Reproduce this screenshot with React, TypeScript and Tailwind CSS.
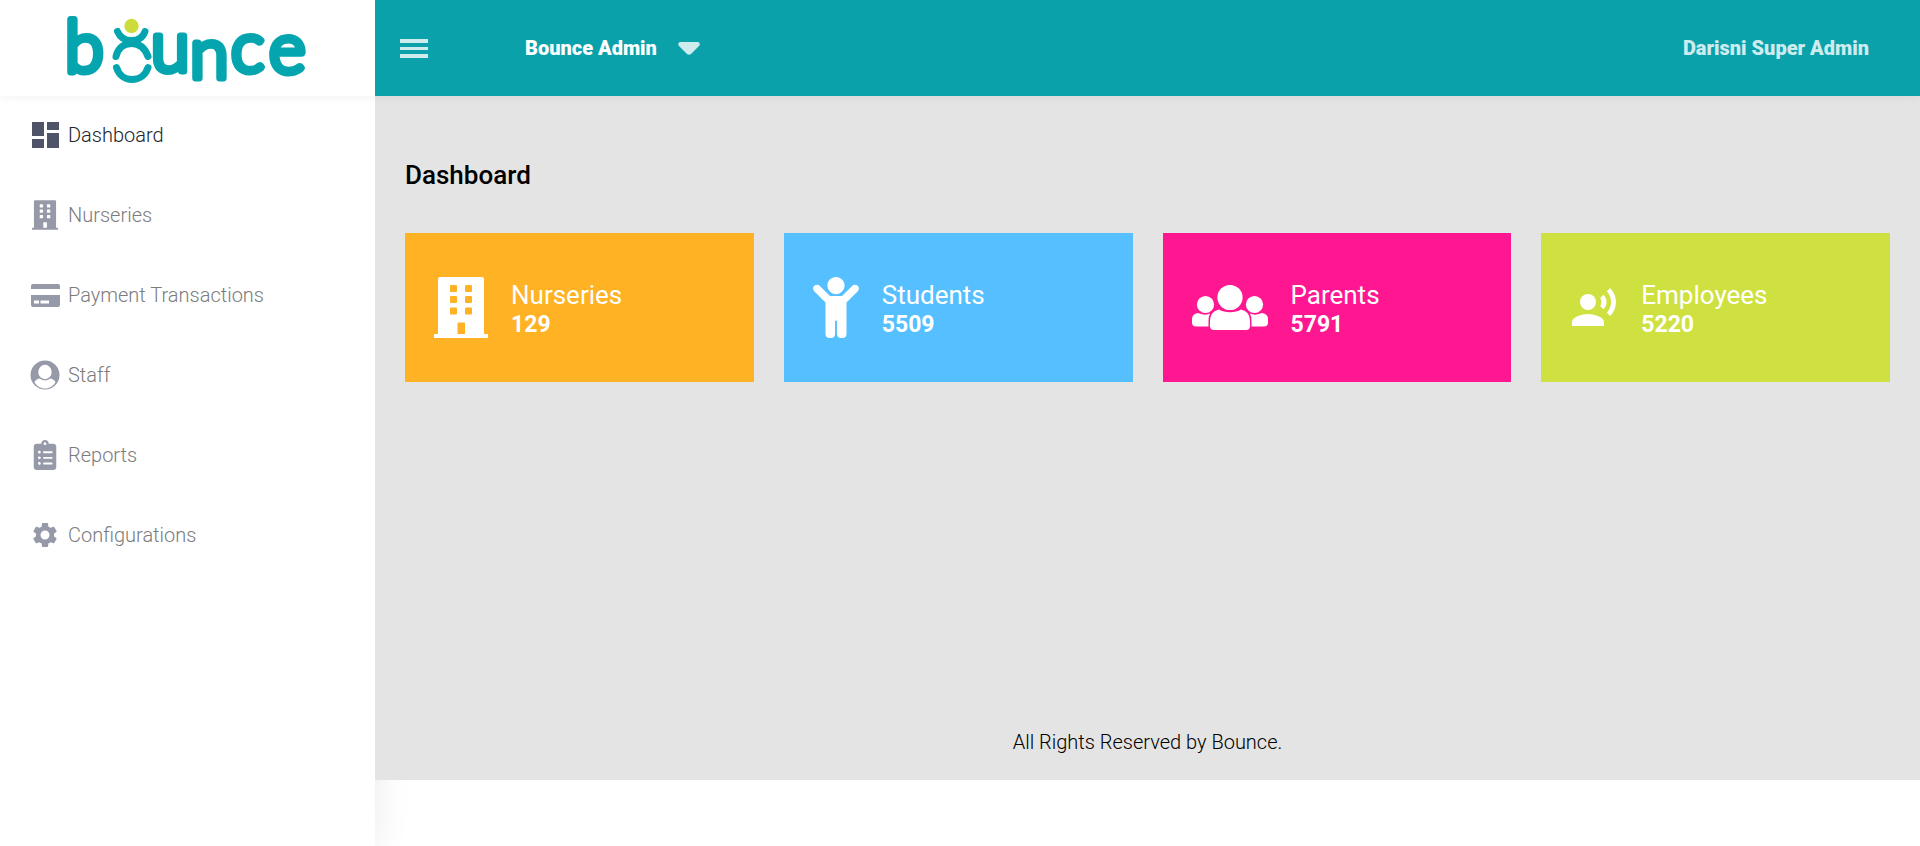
import type { ReactNode } from "react";
import { FaChild, FaClipboardList } from "react-icons/fa";
import { MdRecordVoiceOver, MdSettings } from "react-icons/md";

function BounceLogo() {
  return (
    <svg viewBox="-8 -13 260 96" role="img" aria-label="bounce" className="h-24 w-[260px]">
      <g
        fill="#05a5b0"
        stroke="#05a5b0"
        strokeWidth="7"
        strokeLinejoin="round"
        fontFamily="Lato, sans-serif"
        fontWeight="300"
        fontSize="70"
      >
        <text x="-1" y="59">b</text>
        <text x="85" y="58">u</text>
        <text x="124" y="65">n</text>
        <text x="165" y="59">c</text>
        <text x="203" y="60">e</text>
      </g>
      <g fill="none" stroke="#05a5b0" strokeWidth="7" strokeLinecap="round">
        <path d="M51.500 18.500C54 24.500 59 27.500 65.500 27.500S77 24.500 79 18.500" />
        <path d="M50 43.500C52 35 58 30.500 65.500 30.500S79 35 82 43.500" />
        <path d="M50.500 54.500C53 62.500 59 66.500 66 66.500S79.500 62.500 82 54.500" />
      </g>
      <circle cx="65.500" cy="13" r="7.200" fill="#cbdc3c" />
    </svg>
  );
}

function DashboardIcon() {
  return (
    <svg viewBox="0 0 27 26" className="h-[26px] w-[27px]" fill="currentColor" aria-hidden="true">
      <path d="M0 0h12v14H0zM15 0h12v8H15zM0 17h12v9H0zM15 11h12v15H15z" />
    </svg>
  );
}

function BuildingIcon({ className }: { className: string }) {
  return (
    <svg viewBox="0 0 54 61" className={className} fill="currentColor" fillRule="evenodd" aria-hidden="true">
      <path d="M6 0h42q2 0 2 2v55h3q1 0 1 1v3H0v-3q0-1 1-1h3V2q0-2 2-2zM17 8q-1 0-1 1v5q0 1 1 1h5q1 0 1-1V9q0-1-1-1zM32 8q-1 0-1 1v5q0 1 1 1h5q1 0 1-1V9q0-1-1-1zM17 19q-1 0-1 1v5q0 1 1 1h5q1 0 1-1v-5q0-1-1-1zM32 19q-1 0-1 1v5q0 1 1 1h5q1 0 1-1v-5q0-1-1-1zM17 30.500q-1 0-1 1v5q0 1 1 1h5q1 0 1-1v-5q0-1-1-1zM32 30.500q-1 0-1 1v5q0 1 1 1h5q1 0 1-1v-5q0-1-1-1zM24.500 45.500q-1 0-1 1V57h7.500V46.500q0-1-1-1z" />
    </svg>
  );
}

function CardIcon() {
  return (
    <svg viewBox="0 0 29 23" className="h-[23px] w-[29px]" fill="currentColor" fillRule="evenodd" aria-hidden="true">
      <path d="M2 0h25q2 0 2 2v3H0V2q0-2 2-2zM0 11h29v10q0 2-2 2H2q-2 0-2-2zM3 16.500v3h5v-3zM9.500 16.500v3H18v-3z" />
    </svg>
  );
}

function UserIcon() {
  return (
    <svg viewBox="0 0 30 30" className="size-[30px]" aria-hidden="true">
      <circle cx="15" cy="15" r="14.500" fill="currentColor" />
      <path d="M4.500 22C6 19.500 8.500 18 10.500 18.500C13 20.500 17 20.500 19.500 18.500C21.500 18 24 19.500 25.500 22C23.500 26 19.500 28.500 15 28.500S6.500 26 4.500 22z" fill="white" />
      <ellipse cx="15" cy="12" rx="8" ry="8.500" fill="currentColor" />
      <ellipse cx="15" cy="12" rx="6.700" ry="7.200" fill="white" />
    </svg>
  );
}

function ParentsIcon() {
  return (
    <svg viewBox="0 0 76 46" className="h-[46px] w-[76px]" fill="currentColor" aria-hidden="true">
      <circle cx="38" cy="12.500" r="12.600" />
      <circle cx="13.500" cy="19.500" r="8.600" />
      <circle cx="62.500" cy="19.500" r="8.600" />
      <path d="M27 24.500q4.500 2.800 11 2.800t11-2.800q9 2 9 11V41q0 4-4 4H22q-4 0-4-4v-5.500q0-9 9-11z" />
      <path d="M6 28q7.500 3 12 .500q-1.500 3-1.500 7v6H4q-4 0-4-4V34q0-5 6-6z" />
      <path d="M70 28q-7.500 3-12 .500q1.500 3 1.500 7v6H72q4 0 4-4V34q0-5-6-6z" />
    </svg>
  );
}

const navItems: { label: string; icon: ReactNode; active?: boolean }[] = [
  { label: "Dashboard", icon: <DashboardIcon />, active: true },
  { label: "Nurseries", icon: <BuildingIcon className="h-[30px] w-[26px]" /> },
  { label: "Payment Transactions", icon: <CardIcon /> },
  { label: "Staff", icon: <UserIcon /> },
  { label: "Reports", icon: <FaClipboardList size={30} /> },
  { label: "Configurations", icon: <MdSettings size={30} /> },
];

const stats: { label: string; value: number; color: string; icon: ReactNode }[] = [
  { label: "Nurseries", value: 129, color: "bg-[#ffb223]", icon: <BuildingIcon className="h-[61px] w-[54px]" /> },
  { label: "Students", value: 5509, color: "bg-[#56bfff]", icon: <FaChild className="h-[61px] w-[46px]" /> },
  { label: "Parents", value: 5791, color: "bg-[#ff1791]", icon: <ParentsIcon /> },
  { label: "Employees", value: 5220, color: "bg-[#cfe140]", icon: <MdRecordVoiceOver size={48} /> },
];

export default function App() {
  return (
    <div className="flex min-h-screen flex-col bg-white font-['Roboto',sans-serif] text-black">
      <header className="z-10 flex h-24 shrink-0 bg-[#0ba1ab] shadow-[0_1px_10px_rgba(0,0,0,0.05)]">
        <a href="#" className="flex w-[375px] shrink-0 items-center justify-center bg-white">
          <BounceLogo />
        </a>
        <div className="flex flex-1 items-center pr-[51px] pl-[25px]">
          <button type="button" aria-label="Toggle menu" className="text-[#ceecee]">
            <svg viewBox="0 0 28 19" className="h-[19px] w-7" fill="currentColor" aria-hidden="true">
              <path d="M0 0h28v4H0zM0 8h28v3H0zM0 15h28v4H0z" />
            </svg>
          </button>
          <button type="button" className="ml-[97px] flex items-center gap-[21px] text-xl font-black text-white">
            Bounce Admin
            <svg viewBox="0 0 22 13" className="h-[13px] w-[22px] text-[#ceecee]" fill="currentColor" aria-hidden="true">
              <path d="M2 0h18q3 1 1 4l-8 8q-2 1.500-4 0L1 4Q-1 1 2 0z" />
            </svg>
          </button>
          <span className="ml-auto text-xl font-black text-[#ceecee]">Darisni Super Admin</span>
        </div>
      </header>

      <div className="flex flex-1">
        <aside className="w-[375px] shrink-0 bg-white shadow-[0_0_35px_rgba(0,0,0,0.09)]">
          <nav>
            <ul className="-mt-px">
              {navItems.map((item) => (
                <li key={item.label}>
                  <a
                    href="#"
                    aria-current={item.active ? "page" : undefined}
                    className={`flex h-20 items-center gap-2 pl-[30px] text-xl font-light ${
                      item.active ? "text-[#212529]" : "text-[#7c7c7c]"
                    }`}
                  >
                    <span
                      className={`flex w-[30px] justify-center ${item.active ? "text-[#505468]" : "text-[#9699a8]"}`}
                    >
                      {item.icon}
                    </span>
                    {item.label}
                  </a>
                </li>
              ))}
            </ul>
          </nav>
        </aside>

        <div className="flex flex-1 flex-col pb-[66px]">
          <main className="flex-1 bg-[#e4e4e4] px-[30px] pt-[59px]">
            <h1 className="text-[26px] leading-10 font-medium">Dashboard</h1>
            <div className="mt-[38px] grid grid-cols-4 gap-[30px]">
              {stats.map((stat) => (
                <section
                  key={stat.label}
                  className={`flex h-[149px] items-center gap-[23px] px-[29px] text-white ${stat.color}`}
                >
                  {stat.icon}
                  <div className="pt-1">
                    <h2 className="text-[26px] leading-[30px]">{stat.label}</h2>
                    <p className="text-[23px] leading-[30px] font-bold">{stat.value}</p>
                  </div>
                </section>
              ))}
            </div>
          </main>
          <footer className="bg-[#e4e4e4] pb-6 text-center text-xl leading-7 font-light">
            All Rights Reserved by Bounce.
          </footer>
        </div>
      </div>
    </div>
  );
}
